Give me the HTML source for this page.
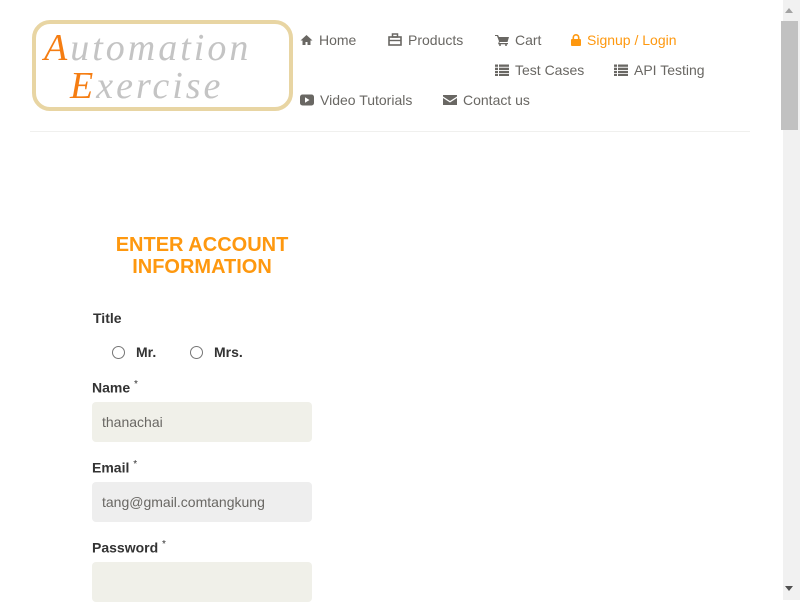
<!DOCTYPE html>
<html><head><style>
body{margin:0;width:800px;height:600px;overflow:hidden;background:#fff;font-family:"Liberation Sans",Arial,sans-serif;position:relative}
.a{position:absolute}
.nav{font-size:14px;color:#696763;white-space:nowrap}
.nav svg{vertical-align:-1px;margin-right:6px}
.lbl{font-size:14px;font-weight:bold;color:#333}
.lbl sup{font-weight:normal;font-size:10px}
.inp{width:220px;height:40px;border-radius:4px;background:#f0f0e9;font-size:14px;color:#696763;line-height:40px;padding-left:10px;box-sizing:border-box}
.radio{width:13px;height:13px;border:1px solid #767676;border-radius:50%;box-sizing:border-box}
.logo{font-family:'Liberation Serif',serif;font-style:italic;font-size:38px;color:#c4c4c4;letter-spacing:3px;line-height:40px}
</style></head><body>
<div class="a" style="left:32px;top:20px;width:261px;height:91px;border:4px solid #e8d5a3;border-radius:18px;box-sizing:border-box;background:#fff"></div>
<div class="a logo" style="left:44px;top:28px"><span style="color:#f57d12">A</span>utomation</div>
<div class="a logo" style="left:70px;top:66px"><span style="color:#f57d12">E</span>xercise</div>

<div class="a nav" style="left:300px;top:32px"><svg width="13" height="12" viewBox="0 0 13 12"><path d="M6.5 1L0.5 6.5h2V11h3V8h2v3h3V6.5h2z" fill="#696763"/></svg>Home</div>
<div class="a nav" style="left:388px;top:32px"><svg width="14" height="13" viewBox="0 0 14 13"><rect x="1" y="4" width="12" height="8" fill="none" stroke="#696763" stroke-width="1.6"/><rect x="4.5" y="1" width="5" height="3" fill="none" stroke="#696763" stroke-width="1.5"/><line x1="1" y1="7.5" x2="13" y2="7.5" stroke="#696763" stroke-width="1.4"/></svg>Products</div>
<div class="a nav" style="left:495px;top:32px"><svg width="14" height="12" viewBox="0 0 14 12"><path d="M0 1h3l1 2h10l-1.5 5H5L4 9h9v1.2H3l1-3L2 2H0z" fill="#696763"/><circle cx="5" cy="11" r="1" fill="#696763"/><circle cx="11" cy="11" r="1" fill="#696763"/></svg>Cart</div>
<div class="a nav" style="left:571px;top:32px;color:#fe980f"><svg width="10" height="12" viewBox="0 0 10 12"><rect x="0" y="5" width="10" height="7" rx="1" fill="#fe980f"/><path d="M2.3 5V3.5a2.7 2.7 0 015.4 0V5" fill="none" stroke="#fe980f" stroke-width="1.6"/></svg>Signup / Login</div>
<div class="a nav" style="left:495px;top:62px"><svg width="14" height="12" viewBox="0 0 14 12"><g fill="#696763"><rect x="0" y="0.5" width="3" height="2.3"/><rect x="4" y="0.5" width="10" height="2.3"/><rect x="0" y="3.7" width="3" height="2.3"/><rect x="4" y="3.7" width="10" height="2.3"/><rect x="0" y="6.9" width="3" height="2.3"/><rect x="4" y="6.9" width="10" height="2.3"/><rect x="0" y="10" width="3" height="2"/><rect x="4" y="10" width="10" height="2"/></g></svg>Test Cases</div>
<div class="a nav" style="left:614px;top:62px"><svg width="14" height="12" viewBox="0 0 14 12"><g fill="#696763"><rect x="0" y="0.5" width="3" height="2.3"/><rect x="4" y="0.5" width="10" height="2.3"/><rect x="0" y="3.7" width="3" height="2.3"/><rect x="4" y="3.7" width="10" height="2.3"/><rect x="0" y="6.9" width="3" height="2.3"/><rect x="4" y="6.9" width="10" height="2.3"/><rect x="0" y="10" width="3" height="2"/><rect x="4" y="10" width="10" height="2"/></g></svg>API Testing</div>
<div class="a nav" style="left:300px;top:92px"><svg width="14" height="12" viewBox="0 0 14 12"><rect x="0" y="0.5" width="14" height="11" rx="2.5" fill="#696763"/><path d="M5 3.3v5.4L9.5 6z" fill="#fff"/></svg>Video Tutorials</div>
<div class="a nav" style="left:443px;top:92px"><svg width="14" height="12" viewBox="0 0 14 12"><path d="M0 1h14v1.5L7 7 0 2.5z" fill="#696763"/><path d="M0 4l7 4.5L14 4v7H0z" fill="#696763"/></svg>Contact us</div>

<div class="a" style="left:30px;top:131px;width:720px;height:1px;background:#f0f0ee"></div>

<div class="a" style="left:92px;top:234px;width:220px;text-align:center;color:#fe980f;font-weight:bold;font-size:20px;line-height:22px">ENTER ACCOUNT<br>INFORMATION</div>

<div class="a lbl" style="left:93px;top:310px">Title</div>
<div class="a radio" style="left:112px;top:346px"></div>
<div class="a lbl" style="left:136px;top:344px">Mr.</div>
<div class="a radio" style="left:190px;top:346px"></div>
<div class="a lbl" style="left:214px;top:344px">Mrs.</div>

<div class="a lbl" style="left:92px;top:379px">Name <sup>*</sup></div>
<div class="a inp" style="left:92px;top:402px">thanachai</div>
<div class="a lbl" style="left:92px;top:459px">Email <sup>*</sup></div>
<div class="a inp" style="left:92px;top:482px;background:#eeeeee">tang@gmail.comtangkung</div>
<div class="a lbl" style="left:92px;top:539px">Password <sup>*</sup></div>
<div class="a inp" style="left:92px;top:562px"></div>

<div class="a" style="left:783px;top:0;width:17px;height:600px;background:#f1f1f1"></div>
<div class="a" style="left:781px;top:21px;width:17px;height:109px;background:#c1c1c1"></div>
<div class="a" style="left:785px;top:8px;width:0;height:0;border-left:4px solid transparent;border-right:4px solid transparent;border-bottom:5px solid #a3a3a3"></div>
<div class="a" style="left:785px;top:586px;width:0;height:0;border-left:4px solid transparent;border-right:4px solid transparent;border-top:5px solid #505050"></div>
</body></html>
